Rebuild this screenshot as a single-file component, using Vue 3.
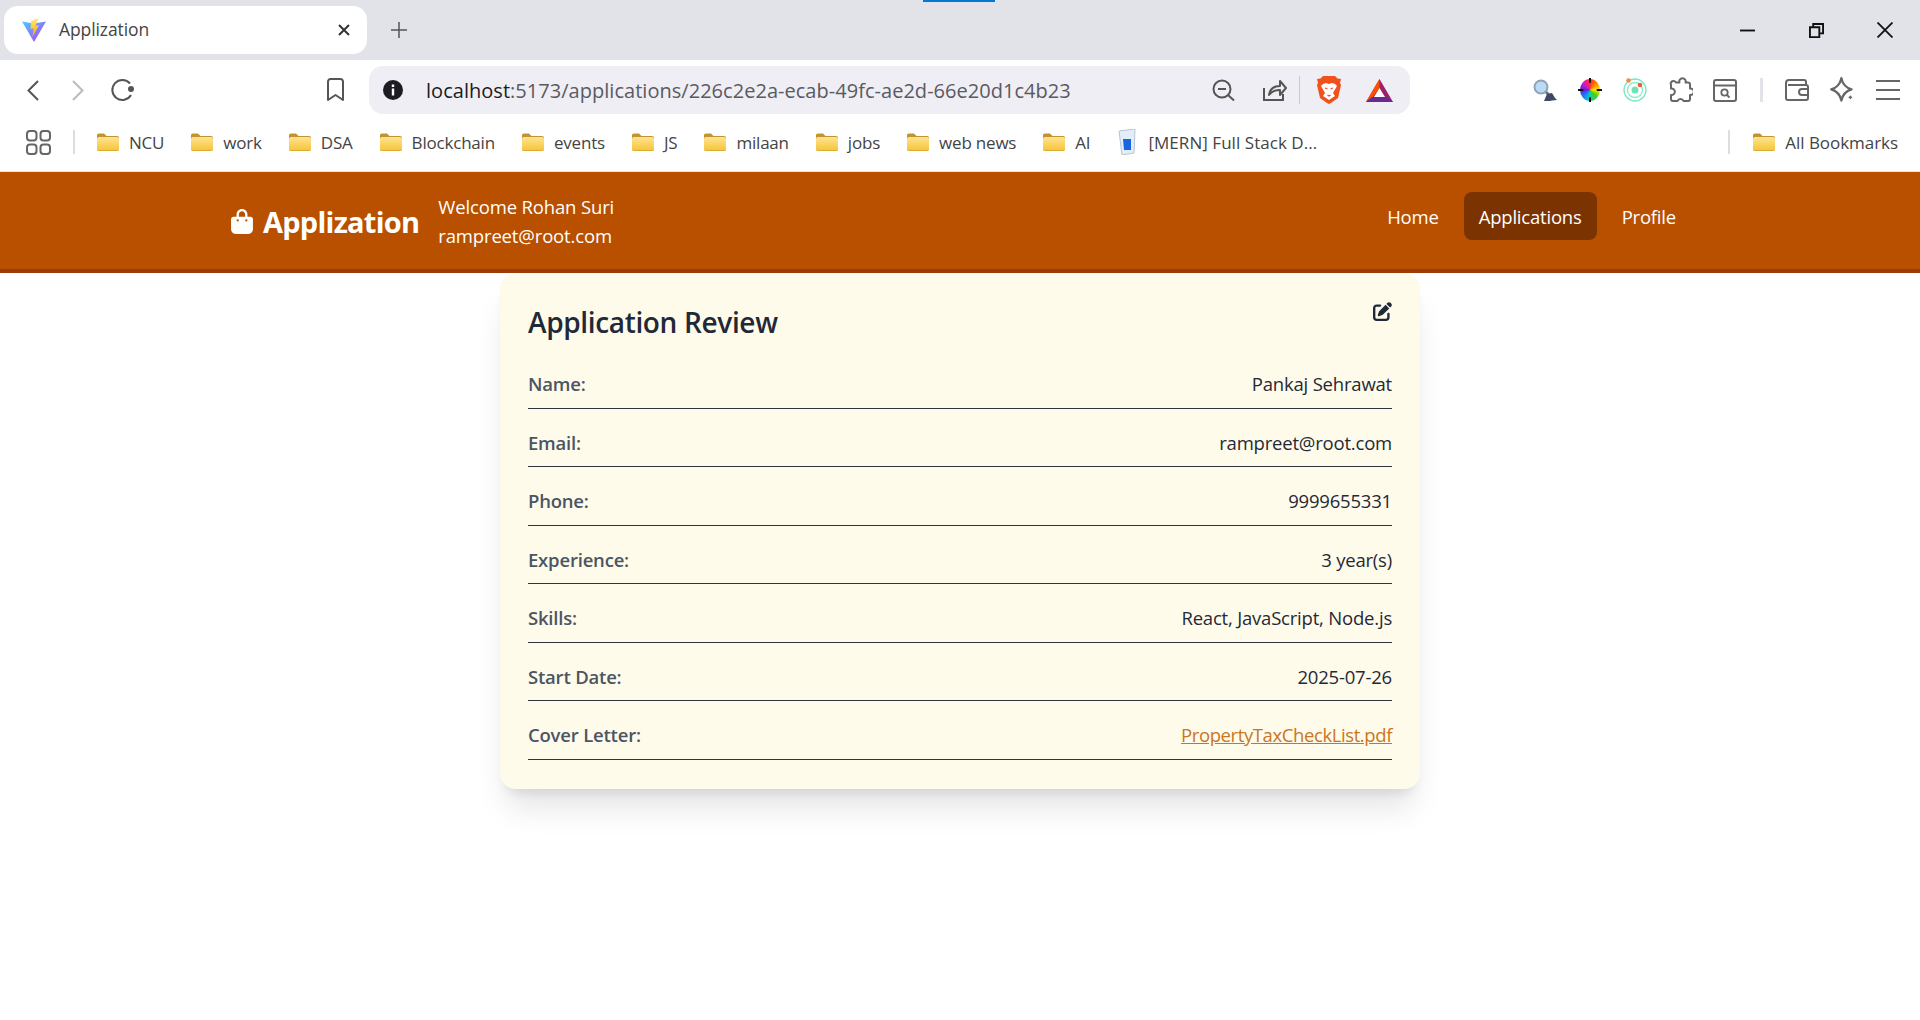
<script setup>
const bookmarks = ['NCU', 'work', 'DSA', 'Blockchain', 'events', 'JS', 'milaan', 'jobs', 'web news', 'AI'];

const rows = [
  { label: 'Name:', value: 'Pankaj Sehrawat' },
  { label: 'Email:', value: 'rampreet@root.com' },
  { label: 'Phone:', value: '9999655331' },
  { label: 'Experience:', value: '3 year(s)' },
  { label: 'Skills:', value: 'React, JavaScript, Node.js' },
  { label: 'Start Date:', value: '2025-07-26' },
  { label: 'Cover Letter:', value: 'PropertyTaxCheckList.pdf', link: true },
];

const navLinks = [
  { name: 'Home' },
  { name: 'Applications', active: true },
  { name: 'Profile' },
];
</script>

<template>
  <div class="page">
    <svg class="defs" width="0" height="0">
      <defs>
        <linearGradient id="folderFill" x1="0" y1="0" x2="0" y2="1">
          <stop offset="0" stop-color="#ffe390" />
          <stop offset="1" stop-color="#f5c53a" />
        </linearGradient>
        <linearGradient id="viteBody" x1="0" y1="0" x2="1" y2="1">
          <stop offset="0" stop-color="#41d1ff" />
          <stop offset="1" stop-color="#bd34fe" />
        </linearGradient>
        <linearGradient id="viteBolt" x1="0" y1="0" x2="0" y2="1">
          <stop offset="0" stop-color="#ffea83" />
          <stop offset="1" stop-color="#ffa800" />
        </linearGradient>
        <symbol id="folder" viewBox="0 0 24 20">
          <path d="M1 4a2 2 0 0 1 2-2.500h5l2.500 2.500H21a2 2 0 0 1 2 2v11a2 2 0 0 1-2 2H3a2 2 0 0 1-2-2z" fill="#c2932f" />
          <path d="M1 7a2 2 0 0 1 2-2h18a2 2 0 0 1 2 2v10a1.500 1.500 0 0 1-1.500 1.500h-19A1.500 1.500 0 0 1 1 17z" fill="url(#folderFill)" />
        </symbol>
      </defs>
    </svg>

    <div class="loadbar"></div>

    <div class="tabstrip">
      <div class="tab">
        <svg class="favicon" viewBox="0 0 24 24">
          <path d="M0 3.500 12 5.500 24 3.500 12 24z" fill="url(#viteBody)" />
          <path d="M9 3 16.500 0 13.500 8 17 7 10.500 19 11.500 10.500 8.500 11z" fill="url(#viteBolt)" />
        </svg>
        <span class="tab-title">Applization</span>
        <svg class="tab-close" viewBox="0 0 12 12"><path d="M1 1l10 10M11 1 1 11" stroke="#333" stroke-width="2" /></svg>
      </div>
      <svg class="tab-new" viewBox="0 0 16 16"><path d="M8 0v16M0 8h16" stroke="#555" stroke-width="1.500" /></svg>
      <div class="win-controls">
        <svg class="win-min" viewBox="0 0 16 16"><path d="M0 8h16" stroke="#111" stroke-width="2" /></svg>
        <svg class="win-max" viewBox="0 0 16 16">
          <path d="M1 4.500h10v10.500H1zM4.500 4V1H15v10h-3.500" fill="none" stroke="#111" stroke-width="2" />
        </svg>
        <svg class="win-close" viewBox="0 0 16 16"><path d="M.5.500l15 15M15.500.500l-15 15" stroke="#111" stroke-width="1.800" /></svg>
      </div>
    </div>

    <div class="toolbar">
      <svg class="i-back" viewBox="0 0 12 21"><path d="M11 1 1.500 10.500 11 20" fill="none" stroke="#555" stroke-width="2" /></svg>
      <svg class="i-forward" viewBox="0 0 12 21"><path d="M1 1l9.500 9.500L1 20" fill="none" stroke="#bbb" stroke-width="2" /></svg>
      <svg class="i-reload" viewBox="0 0 25 24">
        <path d="M20 5.500A10 10 0 1 0 21 17" fill="none" stroke="#555" stroke-width="2" />
        <circle cx="21" cy="11" r="3" fill="#555" />
      </svg>
      <svg class="i-bookmark" viewBox="0 0 19 24">
        <path d="M2 3.500A2.500 2.500 0 0 1 4.500 1h10A2.500 2.500 0 0 1 17 3.500V22l-7.500-5L2 22z" fill="none" stroke="#555" stroke-width="2" stroke-linejoin="round" />
      </svg>

      <div class="urlbar">
        <svg class="i-info" viewBox="0 0 20 20">
          <circle cx="10" cy="10" r="10" fill="#1c1c22" />
          <path d="M8.800 4.500h2.400v2.400H8.800zM8.800 8.500h2.400v7H8.800z" fill="#fff" />
        </svg>
        <span class="url"><span class="host">localhost</span>:5173/applications/226c2e2a-ecab-49fc-ae2d-66e20d1c4b23</span>
        <svg class="i-zoom" viewBox="0 0 23 22">
          <circle cx="10" cy="10" r="8.500" fill="none" stroke="#555" stroke-width="2" />
          <path d="M6 10h8M16 16l6 5.500" stroke="#555" stroke-width="2" fill="none" />
        </svg>
        <svg class="i-share" viewBox="0 0 24 22">
          <path d="M1 9v12h19v-6" fill="none" stroke="#555" stroke-width="2" />
          <path d="M6 16c1-6 5-9 11-9V2l6 7-6 7v-5c-5 0-8 1-11 5z" fill="none" stroke="#555" stroke-width="2" stroke-linejoin="round" />
        </svg>
        <span class="url-sep"></span>
        <svg class="i-brave" viewBox="0 0 24 28">
          <path d="M6 0h12l2.500 2.500L24 3l-1 4 1 2-3 13-7 5-2 1-2-1-7-5L0 9l1-2-1-4 3.500-.5z" fill="#f1511b" />
          <path d="M6 8l3-1 3 1 3-1 3 1 2 2-4 7 2 3-6 4-6-4 2-3-4-7z" fill="#fff" />
          <path d="M8 12l2.500 1M16 12l-2.500 1M10.500 19l1.500 1 1.500-1" stroke="#f1511b" stroke-width="1.300" fill="none" />
        </svg>
        <svg class="i-bat" viewBox="0 0 27 23">
          <path d="M13.500 0 27 23H0z" fill="#9e1f63" />
          <path d="M13.500 0 13.500 9 6 19 0 23z" fill="#ff5000" />
          <path d="M0 23l6-5h15l6 5z" fill="#662d91" />
          <path d="M13.500 9 19 18H8z" fill="#fff" />
        </svg>
      </div>

      <svg class="i-lens" viewBox="0 0 24 22">
        <circle cx="8" cy="8" r="6.500" fill="#b9dcf4" stroke="#8fa3b5" stroke-width="2" />
        <path d="M13 13l4 4" stroke="#69788a" stroke-width="3" />
        <path d="M11 22l3-7 5-1 3 5 2 2-5 .500-2 .500z" fill="#3c4a66" />
      </svg>
      <div class="wheel"><i class="tick-h"></i><i class="tick-v"></i></div>
      <svg class="i-orbit" viewBox="0 0 24 24">
        <circle cx="12" cy="12" r="11" fill="none" stroke="#7be8c0" stroke-width="1.300" />
        <circle cx="12" cy="12" r="7.500" fill="none" stroke="#8cecc9" stroke-width="1.300" />
        <circle cx="12" cy="12" r="3.500" fill="#6fe3b4" />
        <circle cx="5.500" cy="2.500" r="2.300" fill="#ee8a55" />
        <circle cx="17" cy="7" r="2.300" fill="#ee5a45" />
      </svg>
      <svg class="i-puzzle" viewBox="0 0 26 26">
        <path d="M9 5.500h3.500a3.200 3.200 0 1 1 6 0H21a2 2 0 0 1 2 2v4a3.300 3.300 0 1 1 0 6.500v4a2 2 0 0 1-2 2h-4.500a3.200 3.200 0 0 0-6 0H6a2 2 0 0 1-2-2v-4a3.300 3.300 0 1 0 0-6.500V8a2.500 2.500 0 0 1 5-2.500z" fill="none" stroke="#666" stroke-width="2" stroke-linejoin="round" />
      </svg>
      <svg class="i-searchwin" viewBox="0 0 24 23">
        <rect x="1" y="1" width="22" height="21" rx="2" fill="none" stroke="#666" stroke-width="2" />
        <path d="M1 6.500h22" stroke="#666" stroke-width="2" />
        <circle cx="11.500" cy="13.500" r="3.200" fill="none" stroke="#666" stroke-width="1.800" />
        <path d="M14 16l2.500 2.500" stroke="#666" stroke-width="1.800" />
      </svg>
      <span class="tool-sep"></span>
      <svg class="i-wallet" viewBox="0 0 24 22">
        <path d="M21 6V3a2 2 0 0 0-2-2H4a3 3 0 0 0-3 3v15a2 2 0 0 0 2 2h18a2 2 0 0 0 2-2V8a2 2 0 0 0-2-2H3" fill="none" stroke="#666" stroke-width="2" />
        <path d="M23 10h-6a2.500 2.500 0 0 0 0 6h6" fill="none" stroke="#666" stroke-width="2" />
      </svg>
      <svg class="i-star" viewBox="0 0 24 24">
        <path d="M11 1c1 5 4 8.500 9 10-5 1.500-8 5-9 10-1-5-4-8.500-9-10 5-1.500 8-5 9-10z" fill="none" stroke="#666" stroke-width="2" stroke-linejoin="round" />
        <path d="M19 14.500c.400 2 1.500 3.100 3.500 3.500-2 .400-3.100 1.500-3.500 3.500-.400-2-1.500-3.100-3.500-3.500 2-.400 3.100-1.500 3.500-3.500z" fill="#666" stroke="#fff" stroke-width="1" />
      </svg>
      <svg class="i-menu" viewBox="0 0 24 20"><path d="M0 1h24M0 10h24M0 19h24" stroke="#666" stroke-width="2" /></svg>
    </div>

    <div class="bookmarks">
      <svg class="i-apps" viewBox="0 0 25 25">
        <rect x="1" y="1" width="9.500" height="9.500" rx="3" fill="none" stroke="#666" stroke-width="2" />
        <rect x="14.500" y="1" width="9.500" height="9.500" rx="3" fill="none" stroke="#666" stroke-width="2" />
        <rect x="1" y="14.500" width="9.500" height="9.500" rx="3" fill="none" stroke="#666" stroke-width="2" />
        <rect x="14.500" y="14.500" width="9.500" height="9.500" rx="3" fill="none" stroke="#666" stroke-width="2" />
      </svg>
      <span class="bm-sep"></span>
      <div v-for="name in bookmarks" :key="name" class="bm">
        <svg class="folder"><use href="#folder" /></svg>
        <span>{{ name }}</span>
      </div>
      <div class="bm bm-mern">
        <svg class="i-mern" viewBox="0 0 18 26">
          <path d="M1 2l16-2-1 24-12 2z" fill="#e4edf5" stroke="#b3c6d6" stroke-width="1" />
          <path d="M5 10h8v11H6z" fill="#1a66e0" />
        </svg>
        <span>[MERN] Full Stack D...</span>
      </div>
      <span class="bm-sep bm-sep-right"></span>
      <div class="bm bm-all">
        <svg class="folder"><use href="#folder" /></svg>
        <span>All Bookmarks</span>
      </div>
    </div>

    <nav class="navbar">
      <div class="brand">
        <svg class="bag" viewBox="0 0 448 512">
          <path d="M160 112c0-35.300 28.700-64 64-64s64 28.700 64 64v48H160V112zm-48 48H48c-26.500 0-48 21.500-48 48V416c0 53 43 96 96 96H352c53 0 96-43 96-96V208c0-26.500-21.500-48-48-48H336V112C336 50.100 285.900 0 224 0S112 50.100 112 112v48zm24 48a24 24 0 1 1 0 48 24 24 0 1 1 0-48zm152 24a24 24 0 1 1 48 0 24 24 0 1 1 -48 0z" fill="#fff" />
        </svg>
        <span class="brand-name">Applization</span>
        <div class="welcome">
          <div>Welcome Rohan Suri</div>
          <div>rampreet@root.com</div>
        </div>
      </div>
      <div class="nav-links">
        <a v-for="item in navLinks" :key="item.name" href="#" class="nav-link" :class="{ active: item.active }">{{ item.name }}</a>
      </div>
    </nav>

    <main class="content">
      <section class="card">
        <div class="card-head">
          <h2>Application Review</h2>
          <svg class="edit" viewBox="0 0 512 512">
            <path d="M471.600 21.700c-21.900-21.900-57.300-21.900-79.200 0L362.300 51.700l97.900 97.900 30.100-30.100c21.900-21.900 21.900-57.300 0-79.200L471.600 21.700zm-299.200 220c-6.100 6.100-10.800 13.600-13.500 21.900l-29.600 88.800c-2.900 8.600-.600 18.100 5.800 24.600s15.900 8.700 24.600 5.800l88.800-29.600c8.200-2.700 15.700-7.400 21.900-13.500L437.700 172.300 339.700 74.300 172.400 241.700zM96 64C43 64 0 107 0 160V416c0 53 43 96 96 96H352c53 0 96-43 96-96V320c0-17.700-14.300-32-32-32s-32 14.300-32 32v96c0 17.700-14.300 32-32 32H96c-17.700 0-32-14.300-32-32V160c0-17.700 14.300-32 32-32h96c17.700 0 32-14.300 32-32s-14.300-32-32-32H96z" fill="#1f2937" />
          </svg>
        </div>
        <div v-for="row in rows" :key="row.label" class="row">
          <span class="label">{{ row.label }}</span>
          <a v-if="row.link" href="#" class="file">{{ row.value }}</a>
          <span v-else class="value">{{ row.value }}</span>
        </div>
      </section>
    </main>
  </div>
</template>

<style scoped>
.page {
  position: relative;
  min-height: 1020px;
  background: #fff;
  font-family: "Open Sans", "Liberation Sans", sans-serif;
  color: #1f2937;
}

.defs {
  position: absolute;
}

svg {
  display: block;
  flex: none;
}

.loadbar {
  position: absolute;
  left: 923px;
  top: 0;
  width: 72px;
  height: 2px;
  background: #0078d4;
}

.tabstrip {
  display: flex;
  align-items: center;
  height: 60px;
  padding-left: 4px;
  background: #e2e2e9;
}

.tab {
  display: flex;
  align-items: center;
  width: 363px;
  height: 48px;
  padding: 0 17px 0 18px;
  box-sizing: border-box;
  border-radius: 14px;
  background: #fff;
}

.favicon {
  width: 24px;
  height: 24px;
}

.tab-title {
  margin-left: 13px;
  margin-bottom: 2px;
  font-size: 17.500px;
  letter-spacing: -0.1px;
  color: #444;
}

.tab-close {
  width: 12px;
  height: 12px;
  margin-left: auto;
}

.tab-new {
  width: 16px;
  height: 16px;
  margin-left: 24px;
}

.win-controls {
  display: flex;
  align-items: center;
  margin-left: auto;
  padding-right: 27px;
}

.win-min {
  width: 15px;
  height: 15px;
}

.win-max {
  width: 15px;
  height: 15px;
  margin-left: 54px;
}

.win-close {
  width: 16px;
  height: 16px;
  margin-left: 53px;
}

.toolbar {
  display: flex;
  align-items: center;
  height: 60px;
  background: #fff;
}

.i-back {
  width: 12px;
  height: 21px;
  margin-left: 27px;
}

.i-forward {
  width: 12px;
  height: 21px;
  margin-left: 33px;
}

.i-reload {
  width: 25px;
  height: 24px;
  margin-left: 26px;
}

.i-bookmark {
  width: 19px;
  height: 24px;
  margin-left: 191px;
}

.urlbar {
  display: flex;
  align-items: center;
  width: 1041px;
  height: 48px;
  margin-left: 24px;
  border-radius: 14px;
  background: #eeeef4;
}

.i-info {
  width: 20px;
  height: 20px;
  margin-left: 14px;
}

.url {
  margin-left: 23px;
  font-size: 20px;
  letter-spacing: 0.03px;
  color: #5a5a62;
  white-space: nowrap;
}

.host {
  color: #1c1c22;
}

.i-zoom {
  width: 23px;
  height: 22px;
  margin-left: auto;
}

.i-share {
  width: 24px;
  height: 22px;
  margin-left: 28px;
}

.url-sep {
  width: 1px;
  height: 28px;
  margin-left: 12px;
  background: #c9c9d2;
}

.i-brave {
  width: 24px;
  height: 28px;
  margin-left: 17px;
}

.i-bat {
  width: 27px;
  height: 23px;
  margin-left: 25px;
  margin-right: 17px;
}

.i-lens {
  width: 24px;
  height: 22px;
  margin-left: 123px;
}

.wheel {
  position: relative;
  flex: none;
  width: 20px;
  height: 22px;
  margin-left: 23px;
  border-radius: 50%;
  background: conic-gradient(#ff2d2d, #ff8a00, #ffe600, #43d11b, #12d0b0, #1b7cff, #5b22d6, #d417c9, #ff2d2d);
}

.tick-h,
.tick-v {
  position: absolute;
  background: #111;
}

.tick-h {
  left: -2px;
  right: -2px;
  top: 10px;
  height: 2px;
  clip-path: polygon(0 0, 22% 0, 22% 100%, 78% 100%, 78% 0, 100% 0, 100% 100%, 0 100%);
}

.tick-v {
  top: -1px;
  bottom: -1px;
  left: 9px;
  width: 2px;
  clip-path: polygon(0 0, 100% 0, 100% 20%, 0 20%, 0 80%, 100% 80%, 100% 100%, 0 100%);
}

.i-orbit {
  width: 24px;
  height: 24px;
  margin-left: 23px;
}

.i-puzzle {
  width: 26px;
  height: 26px;
  margin-left: 20px;
}

.i-searchwin {
  width: 24px;
  height: 23px;
  margin-left: 20px;
}

.tool-sep {
  width: 3px;
  height: 24px;
  margin-left: 23px;
  background: #e2e2e8;
}

.i-wallet {
  width: 24px;
  height: 22px;
  margin-left: 22px;
}

.i-star {
  width: 27px;
  height: 27px;
  margin-left: 20px;
}

.i-menu {
  width: 24px;
  height: 20px;
  margin-left: 20px;
}

.bookmarks {
  display: flex;
  align-items: center;
  height: 52px;
  padding-bottom: 7px;
  box-sizing: border-box;
  border-bottom: 1px solid #f0e4d8;
  background: #fff;
  font-size: 17px;
  letter-spacing: -0.2px;
  color: #444;
}

.i-apps {
  width: 25px;
  height: 25px;
  margin-left: 26px;
}

.bm-sep {
  flex: none;
  width: 2px;
  height: 24px;
  margin: 0 21px 0 22px;
  background: #dcdce2;
}

.bm-sep-right {
  margin-left: auto;
  margin-right: 22px;
}

.bm {
  display: flex;
  align-items: center;
  gap: 9px;
  margin-right: 26px;
  white-space: nowrap;
}

.bm-mern {
  gap: 12px;
  margin-left: 2px;
  letter-spacing: 0.05px;
}

.bm-all {
  margin-right: 22px;
  letter-spacing: -0.05px;
}

.folder {
  width: 24px;
  height: 20px;
}

.i-mern {
  width: 18px;
  height: 26px;
}

.navbar {
  position: relative;
  z-index: 1;
  display: flex;
  align-items: flex-start;
  justify-content: space-between;
  padding: 20px 229px 19px 231px;
  border-bottom: 4px solid #9a3d06;
  background: #b85000;
  color: #fff;
}

.brand {
  display: flex;
  align-items: center;
}

.bag {
  width: 22px;
  height: 25px;
}

.brand-name {
  margin-left: 10px;
  margin-top: 2px;
  font-size: 29px;
  font-weight: 700;
  line-height: 40px;
  letter-spacing: -0.75px;
}

.welcome {
  margin-left: 19px;
  font-size: 18.500px;
  line-height: 29px;
  letter-spacing: -0.15px;
}

.nav-links {
  display: flex;
  gap: 10px;
}

.nav-link {
  padding: 10px 15px 8px;
  border-radius: 8px;
  font-size: 18.500px;
  line-height: 30px;
  letter-spacing: -0.2px;
  color: #fff;
  text-decoration: none;
}

.nav-link.active {
  background: #7c3302;
}

.content {
  display: flex;
  justify-content: center;
}

.card {
  width: 920px;
  padding: 29px 28px;
  box-sizing: border-box;
  border-radius: 16px;
  background: #fffbeb;
  box-shadow: 0 25px 31px -6px rgba(0, 0, 0, 0.1), 0 10px 12px -7px rgba(0, 0, 0, 0.1);
}

.card-head {
  display: flex;
  justify-content: space-between;
  height: 48px;
}

.card-head h2 {
  margin: 0;
  font-size: 28px;
  font-weight: 600;
  line-height: 40px;
  letter-spacing: -0.35px;
  color: #1f2937;
}

.edit {
  width: 19px;
  height: 19px;
}

.row {
  display: flex;
  justify-content: space-between;
  height: 58.500px;
  padding: 19px 0 8.500px;
  box-sizing: border-box;
  border-bottom: 1px solid #2d3440;
  font-size: 18.500px;
  line-height: 30px;
  letter-spacing: -0.2px;
}

.label {
  font-weight: 600;
  color: #4b5563;
}

.value {
  color: #1f2937;
}

.file {
  letter-spacing: -0.4px;
  color: #c9761f;
}
</style>

<style>
html,
body {
  margin: 0;
  background: #fff;
}
</style>
